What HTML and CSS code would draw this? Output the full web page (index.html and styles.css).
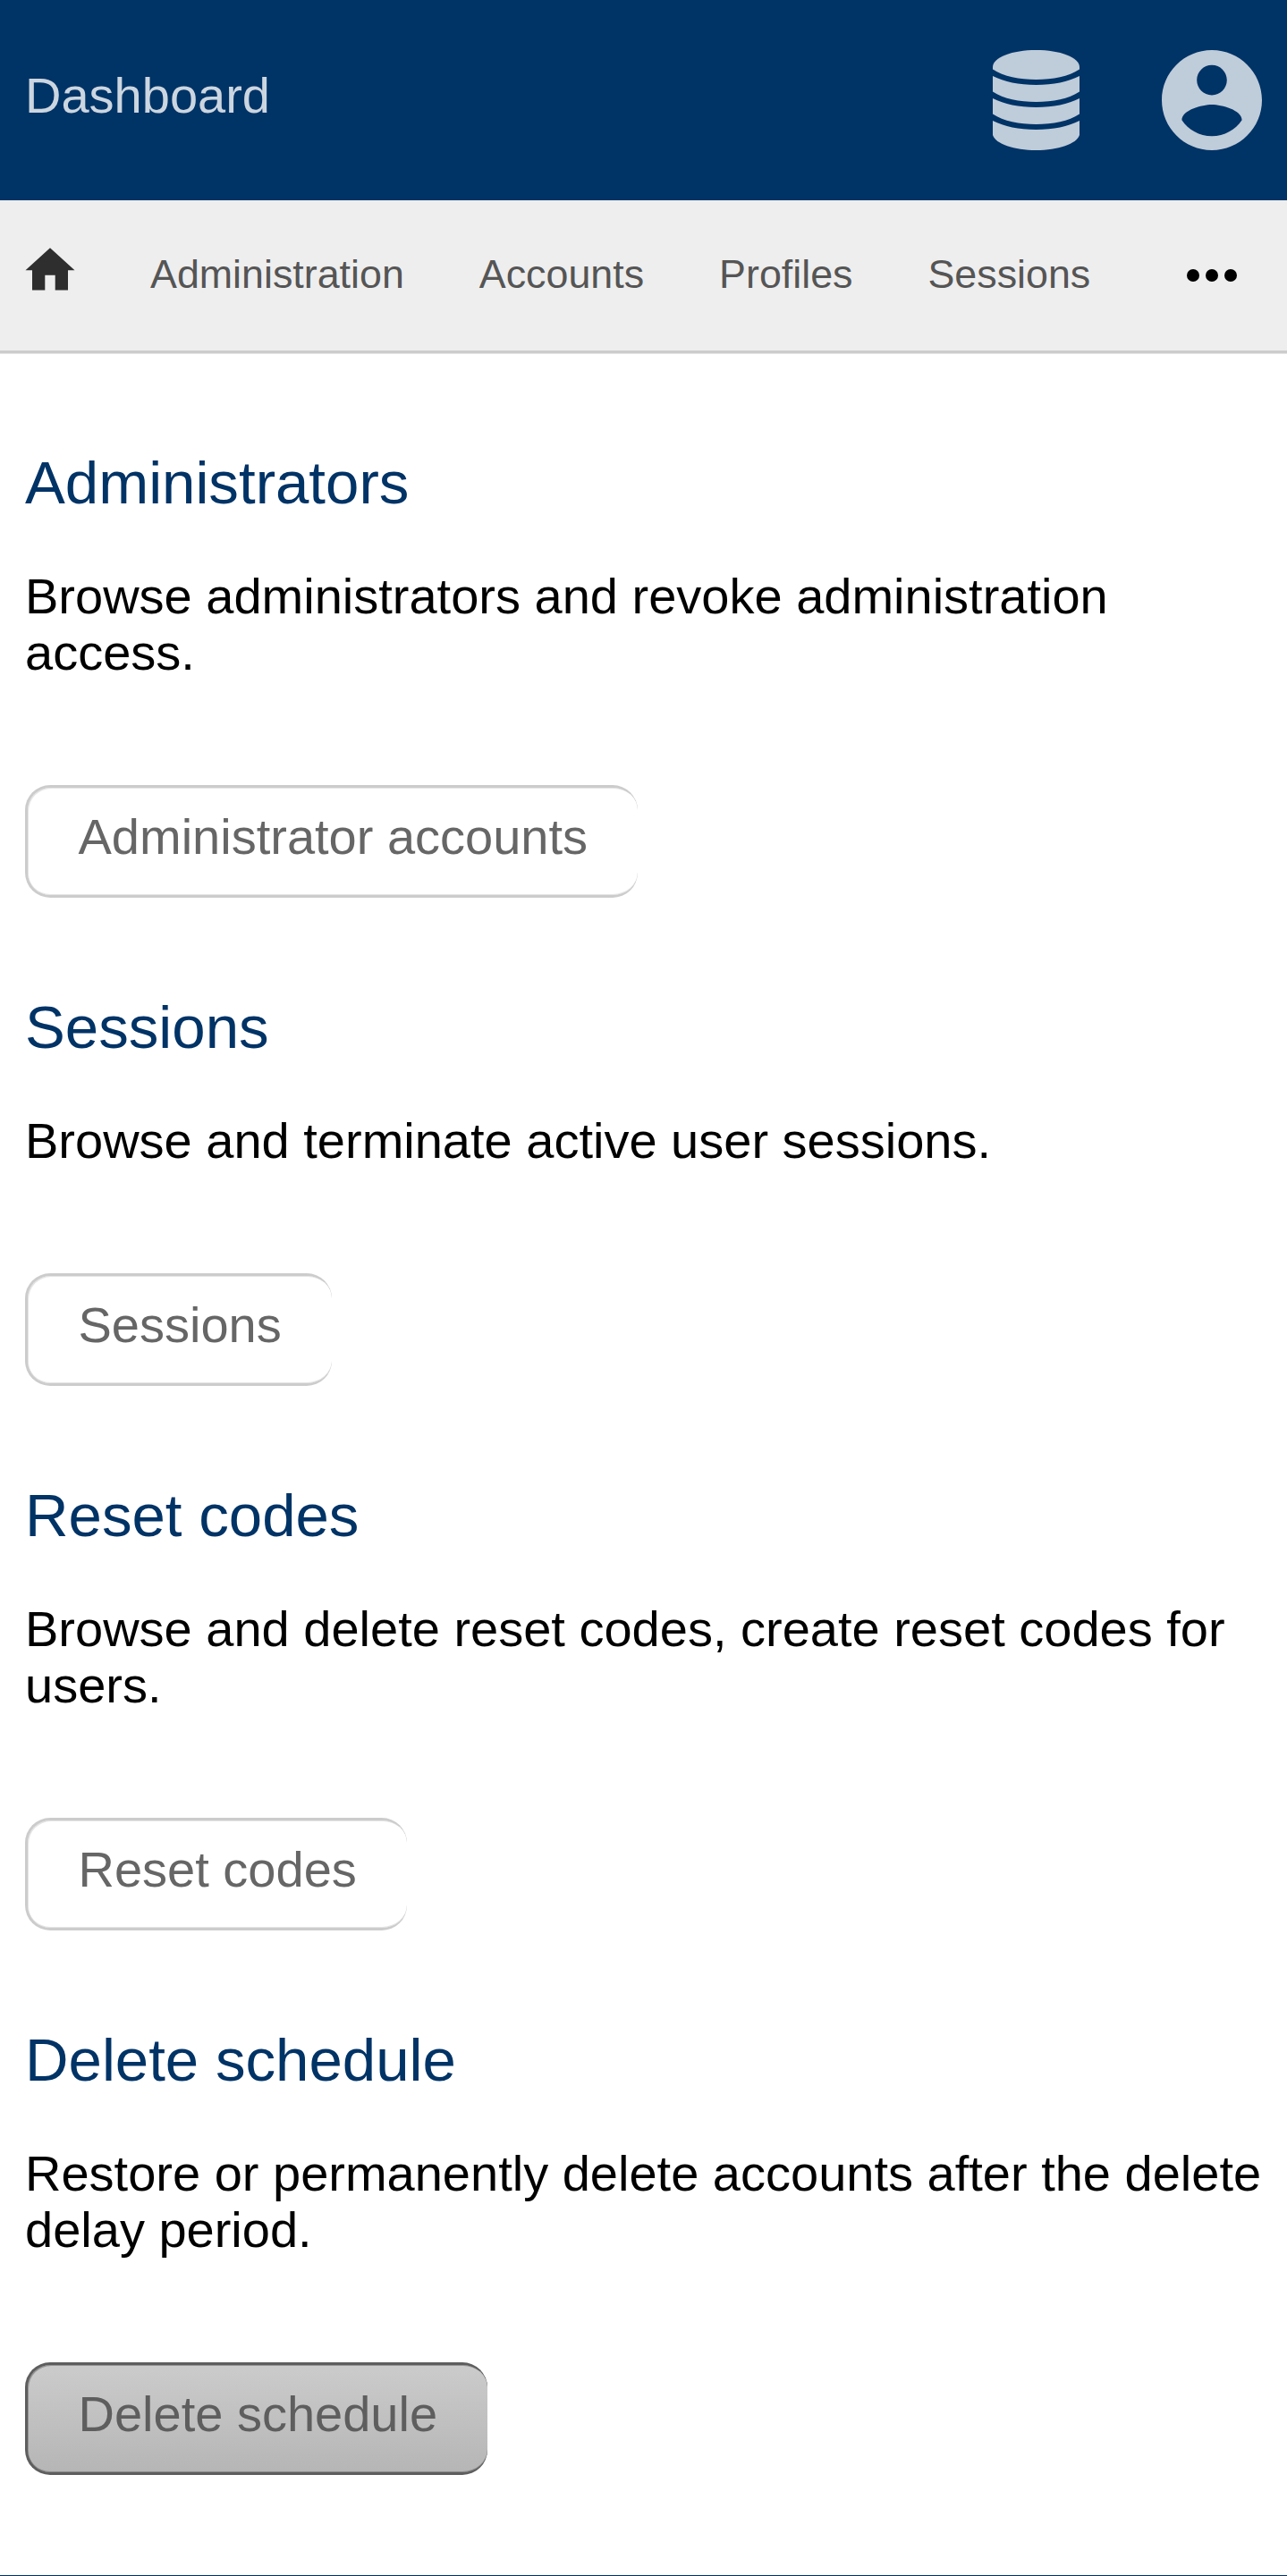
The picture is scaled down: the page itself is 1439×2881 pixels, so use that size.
FILE: index.html
```html
<!DOCTYPE html>
<html lang="en">
<head>
<meta charset="utf-8">
<title>Dashboard</title>
<link rel="stylesheet" href="styles.css">
</head>
<body>
<header class="header">
  <h1 class="title">Dashboard</h1>
  <div class="header-icons">
    <svg class="icon-db" viewBox="0 0 97 112" aria-label="Database">
      <path d="M0 19C0 8 22 0 48.500 0S97 8 97 19V21.500C85 29.500 67 33 48.500 33S12 29.500 0 21.500Z"/>
      <path d="M0 29C13 35.500 29 39 48.500 39S84 35.500 97 29V46.500C85 54.500 67 58 48.500 58S12 54.500 0 46.500Z"/>
      <path d="M0 54C13 60.500 29 64 48.500 64S84 60.500 97 54V71.500C85 79.500 67 83 48.500 83S12 79.500 0 71.500Z"/>
      <path d="M0 79C13 85.500 29 89 48.500 89S84 85.500 97 79V95C94 105 73 112 48.500 112S3 105 0 95Z"/>
    </svg>
    <svg class="icon-user" viewBox="2 2 20 20" aria-label="Account">
      <path d="M12 2C6.480 2 2 6.480 2 12s4.480 10 10 10 10-4.480 10-10S17.520 2 12 2zm0 3c1.660 0 3 1.340 3 3s-1.340 3-3 3-3-1.340-3-3 1.340-3 3-3zm0 14.200c-2.500 0-4.710-1.280-6-3.220.030-1.990 4-3.080 6-3.080 1.990 0 5.970 1.090 6 3.080-1.290 1.940-3.500 3.220-6 3.220z"/>
    </svg>
  </div>
</header>
<nav class="nav">
  <a class="nav-home"><svg class="icon-home" viewBox="0 0 56 48" aria-label="Home"><path d="M28 0.300L55.500 25.200H48V47.600H33.700V30.700H22.300V47.600H8V25.200H0.500Z"/></svg></a>
  <a>Administration</a>
  <a>Accounts</a>
  <a>Profiles</a>
  <a>Sessions</a>
  <svg class="icon-more" viewBox="0 0 56 14" aria-label="More"><circle cx="7" cy="7" r="7"/><circle cx="28" cy="7" r="7"/><circle cx="49" cy="7" r="7"/></svg>
</nav>
<main class="content">
  <section class="section">
    <h2>Administrators</h2>
    <p>Browse administrators and revoke administration access.</p>
    <a class="button">Administrator accounts</a>
  </section>
  <section class="section">
    <h2>Sessions</h2>
    <p>Browse and terminate active user sessions.</p>
    <a class="button">Sessions</a>
  </section>
  <section class="section">
    <h2>Reset codes</h2>
    <p>Browse and delete reset codes, create reset codes for users.</p>
    <a class="button">Reset codes</a>
  </section>
  <section class="section">
    <h2>Delete schedule</h2>
    <p>Restore or permanently delete accounts after the delete delay period.</p>
    <a class="button button-active">Delete schedule</a>
  </section>
</main>
<footer class="footer"></footer>
</body>
</html>
```
FILE: styles.css
```css
* { box-sizing: border-box; }
html, body { margin: 0; height: 2881px; overflow: hidden; }
body {
  display: flex;
  flex-direction: column;
  background: #fff;
  color: #000;
  font: 56px/63px "Liberation Sans", Arial, sans-serif;
}
.header {
  display: flex;
  justify-content: space-between;
  align-items: flex-start;
  height: 224px;
  padding: 56px 28px;
  background: #036;
}
.title { margin: 19px 0 0; font-size: 56px; font-weight: 400; color: #ccd6e0; }
.header-icons { display: flex; gap: 92px; fill: #bfccd9; }
.icon-db { width: 97px; height: 112px; }
.icon-user { width: 112px; height: 112px; }
.nav {
  display: flex;
  gap: 84px;
  height: 171px;
  padding: 57px 56px 0 28px;
  border-bottom: 3px solid #ccc;
  box-shadow: 0 1px #e5e5e5;
  background: #eee;
  font-size: 44.8px;
  line-height: 51px;
  color: #555;
}
.nav a { height: 51px; }
.icon-home { display: block; width: 56px; height: 48px; margin-top: -4px; fill: #2e2e2e; }
.icon-more { width: 56px; height: 14px; margin: 20px 0 0 auto; fill: #000; }
.content { flex: 1; padding: 0 28px; }
.section { display: flex; flex-direction: column; align-items: flex-start; padding-top: 106px; }
.section h2 { margin: 0 0 57px; font-size: 67.2px; font-weight: 400; line-height: 77px; color: #036; }
.section p { margin: 0 0 117px; }
.button {
  height: 126px;
  padding: 23px 56px 0 56.5px;
  border: 3px solid #ccc;
  border-right: 0;
  border-radius: 28px;
  box-shadow: inset 1px 1px #e5e5e5, inset 0 -1px #e5e5e5;
  color: #666;
}
.button-active {
  border-color: #5e5e5e;
  box-shadow: inset 1px 1px #959595, inset 0 -1px #8a8a8a;
  background: linear-gradient(#ccc, #b5b5b5) border-box;
  color: #5e5e5e;
}
.footer { height: 1px; background: #036; }
```
